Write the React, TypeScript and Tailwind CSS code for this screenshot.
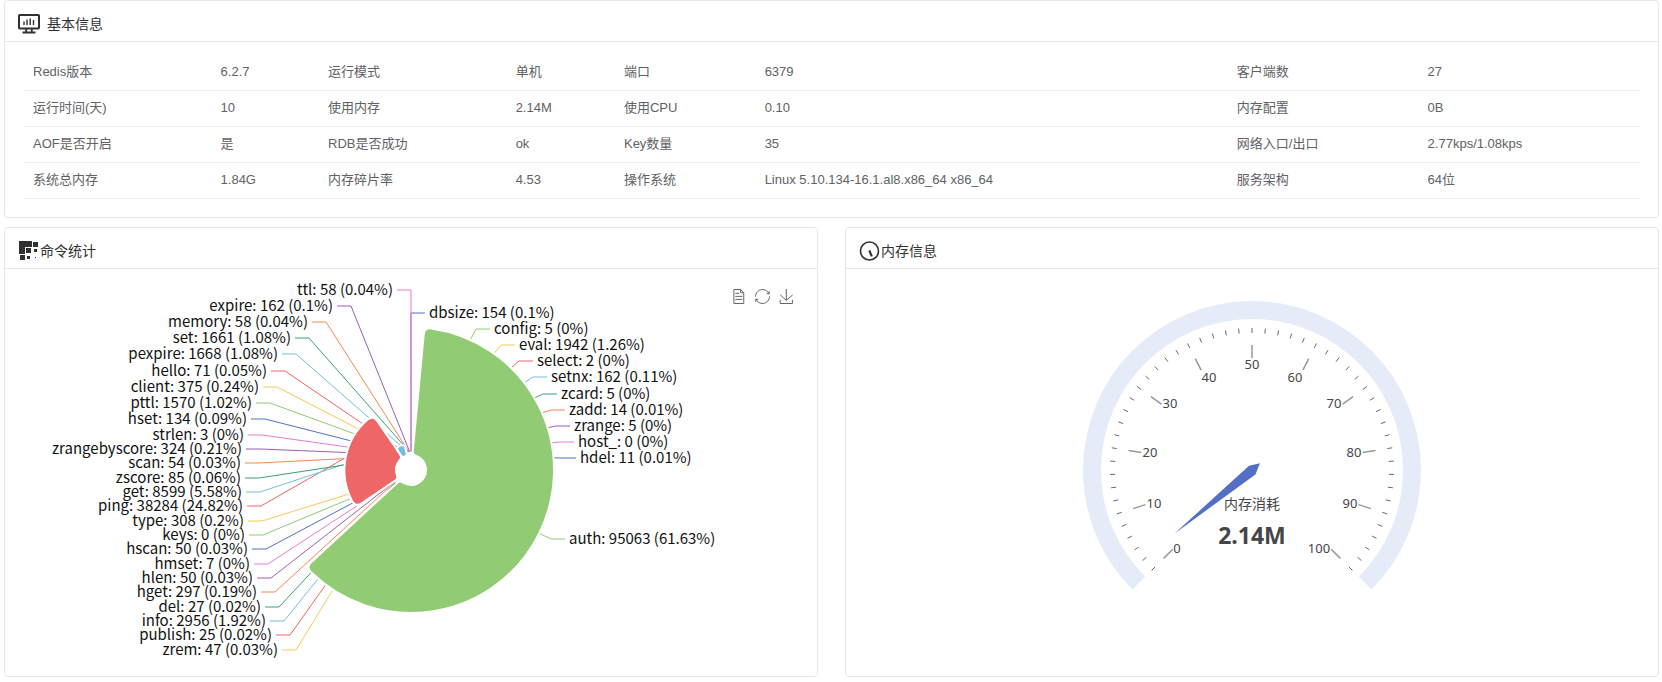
import type { ReactNode } from "react";

const PALETTE = ["#5470c6", "#91cc75", "#fac858", "#ee6666", "#73c0de", "#3ba272", "#fc8452", "#9a60b4", "#ea7ccc"];

const INFO_ROWS: string[][] = [
  ["Redis版本", "6.2.7", "运行模式", "单机", "端口", "6379", "客户端数", "27"],
  ["运行时间(天)", "10", "使用内存", "2.14M", "使用CPU", "0.10", "内存配置", "0B"],
  ["AOF是否开启", "是", "RDB是否成功", "ok", "Key数量", "35", "网络入口/出口", "2.77kps/1.08kps"],
  ["系统总内存", "1.84G", "内存碎片率", "4.53", "操作系统", "Linux 5.10.134-16.1.al8.x86_64 x86_64", "服务架构", "64位"],
];

type Command = {
  name: string;
  value: number;
  percent: string;
  side: "left" | "right";
  elbow: [number, number];
};

const cmd = (name: string, value: number, percent: string, side: "left" | "right", x: number, y: number): Command => ({
  name,
  value,
  percent,
  side,
  elbow: [x, y],
});

const COMMANDS: Command[] = [
  cmd("dbsize", 154, "0.1", "right", 411, 314),
  cmd("config", 5, "0", "right", 476, 330),
  cmd("eval", 1942, "1.26", "right", 501, 346),
  cmd("select", 2, "0", "right", 519, 362),
  cmd("setnx", 162, "0.11", "right", 533, 378),
  cmd("zcard", 5, "0", "right", 543, 395),
  cmd("zadd", 14, "0.01", "right", 551, 411),
  cmd("zrange", 5, "0", "right", 556, 427),
  cmd("host_", 0, "0", "right", 560, 443),
  cmd("hdel", 11, "0.01", "right", 562, 459),
  cmd("auth", 95063, "61.63", "right", 551, 540),
  cmd("zrem", 47, "0.03", "left", 296, 651),
  cmd("publish", 25, "0.02", "left", 290, 636),
  cmd("info", 2956, "1.92", "left", 284, 622),
  cmd("del", 27, "0.02", "left", 279, 608),
  cmd("hget", 297, "0.19", "left", 275, 593),
  cmd("hlen", 50, "0.03", "left", 271, 579),
  cmd("hmset", 7, "0", "left", 268, 565),
  cmd("hscan", 50, "0.03", "left", 266, 550),
  cmd("keys", 0, "0", "left", 263, 536),
  cmd("type", 308, "0.2", "left", 262, 522),
  cmd("ping", 38284, "24.82", "left", 261, 507),
  cmd("get", 8599, "5.58", "left", 260, 493),
  cmd("zscore", 85, "0.06", "left", 259, 479),
  cmd("scan", 54, "0.03", "left", 259, 464),
  cmd("zrangebyscore", 324, "0.21", "left", 260, 450),
  cmd("strlen", 3, "0", "left", 262, 436),
  cmd("hset", 134, "0.09", "left", 265, 420),
  cmd("pttl", 1570, "1.02", "left", 270, 404),
  cmd("client", 375, "0.24", "left", 277, 388),
  cmd("hello", 71, "0.05", "left", 285, 372),
  cmd("pexpire", 1668, "1.08", "left", 296, 355),
  cmd("set", 1661, "1.08", "left", 309, 339),
  cmd("memory", 58, "0.04", "left", 326, 323),
  cmd("expire", 162, "0.1", "left", 351, 307),
  cmd("ttl", 58, "0.04", "left", 411, 291),
];

const polar = (cx: number, cy: number, r: number, deg: number): [number, number] => {
  const a = (deg * Math.PI) / 180;
  return [cx + r * Math.sin(a), cy - r * Math.cos(a)];
};

const at = (p: [number, number]) => `${p[0].toFixed(2)} ${p[1].toFixed(2)}`;

/* Ring sector with softened corners; angles run clockwise from twelve o'clock. */
function sectorPath(cx: number, cy: number, r0: number, r1: number, a0: number, a1: number) {
  const span = a1 - a0;
  const toDeg = 180 / Math.PI;
  const co = Math.min(7, (r1 - r0) / 2, (span / toDeg) * r1 * 0.4);
  const ci = Math.min(4, (r1 - r0) / 2, (span / toDeg) * r0 * 0.4);
  const dO = (co / r1) * toDeg;
  const dI = (ci / r0) * toDeg;
  const large = span > 180 ? 1 : 0;
  const p = (r: number, a: number) => at(polar(cx, cy, r, a));
  return [
    `M${p(r0 + ci, a0)}`,
    `L${p(r1 - co, a0)}`,
    `Q${p(r1, a0)} ${p(r1, a0 + dO)}`,
    `A${r1} ${r1} 0 ${large} 1 ${p(r1, a1 - dO)}`,
    `Q${p(r1, a1)} ${p(r1 - co, a1)}`,
    `L${p(r0 + ci, a1)}`,
    `Q${p(r0, a1)} ${p(r0, a1 - dI)}`,
    `A${r0} ${r0} 0 ${large} 0 ${p(r0, a0 + dI)}`,
    `Q${p(r0, a0)} ${p(r0 + ci, a0)}`,
    "Z",
  ].join(" ");
}

function CommandChart() {
  const cx = 411;
  const cy = 471;
  const inner = 15;
  const outer = 143;
  const total = COMMANDS.reduce((sum, c) => sum + c.value, 0);
  const max = Math.max(...COMMANDS.map((c) => c.value));
  let angle = 0;
  const slices = COMMANDS.map((c, i) => {
    const start = angle;
    const end = start + (c.value / total) * 360;
    angle = end;
    const radius = inner + ((outer - inner) * c.value) / max;
    return { ...c, start, end, radius, color: PALETTE[i % PALETTE.length] };
  });
  return (
    <svg viewBox="5 270 812 407" className="block h-[407px] w-full" role="img" aria-label="命令统计">
      {slices.map((s) => {
        const from = polar(cx, cy, s.radius, (s.start + s.end) / 2);
        const [ex, ey] = s.elbow;
        const dir = s.side === "left" ? -1 : 1;
        return (
          <path
            key={s.name}
            d={`M${at(from)} L${ex} ${ey} H${ex + dir * 14}`}
            fill="none"
            stroke={s.color}
            strokeWidth="1"
          />
        );
      })}
      {slices.map((s) => (
        <path
          key={s.name}
          d={sectorPath(cx, cy, inner, s.radius, s.start, s.end)}
          fill={s.color}
          stroke="#fff"
          strokeWidth="2"
        />
      ))}
      <g fontSize="15" fill="#111" className="font-['Noto_Sans_CJK_SC',sans-serif]">
        {slices.map((s) => (
          <text
            key={s.name}
            x={s.elbow[0] + (s.side === "left" ? -18 : 18)}
            y={s.elbow[1] + 5}
            textAnchor={s.side === "left" ? "end" : "start"}
          >
            {`${s.name}: ${s.value} (${s.percent}%)`}
          </text>
        ))}
      </g>
    </svg>
  );
}

const GAUGE_LABELS: [number, number, number][] = [
  [0, 1177, 549],
  [10, 1154, 504],
  [20, 1150, 453],
  [30, 1170, 404],
  [40, 1209, 378],
  [50, 1252, 365],
  [60, 1295, 378],
  [70, 1334, 404],
  [80, 1354, 453],
  [90, 1350, 504],
  [100, 1319, 549],
];

function MemoryGauge() {
  const cx = 1252;
  const cy = 471;
  const ticks = Array.from({ length: 51 }, (_, i) => -135 + i * 5.4);
  const splits = Array.from({ length: 11 }, (_, i) => -135 + i * 27);
  return (
    <svg viewBox="846 270 812 407" className="block h-[407px] w-full" role="img" aria-label="内存消耗 2.14M">
      <path
        d={`M${at(polar(cx, cy, 160, -135))} A160 160 0 1 1 ${at(polar(cx, cy, 160, 135))}`}
        fill="none"
        stroke="#e6ebf8"
        strokeWidth="18"
      />
      {ticks.map((a) => (
        <path key={a} d={`M${at(polar(cx, cy, 142, a))} L${at(polar(cx, cy, 137, a))}`} stroke="#63677a" strokeWidth="1" />
      ))}
      {splits.map((a) => (
        <path key={a} d={`M${at(polar(cx, cy, 125, a))} L${at(polar(cx, cy, 112, a))}`} stroke="#999" strokeWidth="1.5" />
      ))}
      <path d="M1174.3 534.7 L1249 466.8 L1260 464.2 L1255.4 475.4 Z" fill="#5470c6" />
      <g className="font-['Noto_Sans','Noto_Sans_CJK_SC',sans-serif]" fill="#464646" textAnchor="middle">
        {GAUGE_LABELS.map(([value, x, y]) => (
          <text key={value} x={x} y={y + 5} fontSize="13">
            {value}
          </text>
        ))}
        <text x={cx} y="510" fontSize="14">
          内存消耗
        </text>
        <text x={cx} y="545" fontSize="23" fontWeight="700">
          2.14M
        </text>
      </g>
    </svg>
  );
}

function ToolButton({ label, path }: { label: string; path: string }) {
  return (
    <button type="button" aria-label={label} className="block size-[15px] cursor-pointer">
      <svg viewBox="0 0 60 60" className="block size-[15px] overflow-visible" fill="none" stroke="#666" strokeWidth="4">
        <path d={path} />
      </svg>
    </button>
  );
}

function Toolbox() {
  return (
    <div className="absolute top-5 right-[23px] flex gap-[9px]">
      <ToolButton
        label="数据视图"
        path="M17.5,17.3H33 M45.4,29.5h-28 M11.5,2v56H51V14.8L38.4,2H11.5z M38.4,2.2v12.7H51 M45.4,41.7h-28"
      />
      <ToolButton
        label="还原"
        path="M47,18.9h9.8V8.7 M56.3,20.1C52.1,9,40.5,0.6,26.8,2.1C12.6,3.7,1.6,16.2,2.1,30.6 M13,41.1H3.1v10.2 M3.7,39.9c4.2,11.1,15.8,19.5,29.5,18c14.2-1.6,25.2-14.1,24.7-28.5"
      />
      <ToolButton
        label="保存为图片"
        path="M4.7,22.9L29.3,45.5L54.7,23.4M4.6,43.6L4.6,58L53.8,58L53.8,43.6M29.2,45.1L29.2,0"
      />
    </div>
  );
}

function MonitorIcon() {
  return (
    <svg viewBox="0 0 22 20" className="h-5 w-[22px]" fill="none" stroke="#303133">
      <rect x="1" y="1" width="20" height="13.5" rx="0.8" strokeWidth="2" />
      <path d="M6 7.5v3.5 M9 5.5v5.5 M12.2 4.5v6.5 M15.5 6v5" strokeWidth="1.4" />
      <path d="M8.2 15v3 M13.8 15v3" strokeWidth="1.8" />
      <path d="M4.5 18.5h13" strokeWidth="1.8" />
    </svg>
  );
}

function BlocksIcon() {
  return (
    <svg viewBox="-1 0 21 20" className="h-5 w-[21px]" fill="#303133">
      <path d="M0 0h13v6H6v7H0z" />
      <path d="M14 1h5v5h-5z M7 7h5v5H7z M15 8h3v3h-3z M1 14h5v5H1z M8 15h3v3H8z M16 16h1v1h-1z" />
    </svg>
  );
}

function DialIcon() {
  return (
    <svg viewBox="-1 0 21 20" className="h-5 w-[21px]" fill="none" stroke="#303133">
      <circle cx="9.5" cy="10" r="9" strokeWidth="1.6" />
      <path d="M9.3 9.4L11.8 15.4" strokeWidth="2.2" />
    </svg>
  );
}

function Card({ icon, title, children }: { icon: ReactNode; title: ReactNode; children: ReactNode }) {
  return (
    <section className="overflow-hidden rounded-sm border border-[#e4e7ed] bg-white">
      <header className="flex h-[41px] items-center border-b border-[#e4e7ed] px-[13px] pt-1.5 text-sm text-[#303133]">
        {icon}
        {title}
      </header>
      {children}
    </section>
  );
}

export default function App() {
  return (
    <main className="flex flex-col gap-[9px] bg-white pr-[3px] pb-1 pl-1 font-['Liberation_Sans','Noto_Sans_CJK_SC',sans-serif]">
      <Card icon={<MonitorIcon />} title={<h2 className="ml-[7px]">基本信息</h2>}>
        <div className="px-[18px] pt-3 pb-[18px]">
          <table className="w-full table-fixed border-collapse text-left text-[13px] leading-5 text-[#606266]">
            <colgroup>
              <col className="w-[11.6%]" />
              <col className="w-[6.65%]" />
              <col className="w-[11.6%]" />
              <col className="w-[6.7%]" />
              <col className="w-[8.7%]" />
              <col className="w-[29.2%]" />
              <col className="w-[11.8%]" />
              <col className="w-[13.75%]" />
            </colgroup>
            <tbody>
              {INFO_ROWS.map((row) => (
                <tr key={row[0]} className="h-9 border-b border-[#ebeef5]">
                  {row.map((text, i) =>
                    i % 2 === 0 ? (
                      <th key={i} scope="row" className="px-2.5 font-normal whitespace-nowrap">
                        {text}
                      </th>
                    ) : (
                      <td key={i} className="px-2.5 whitespace-nowrap">
                        {text}
                      </td>
                    ),
                  )}
                </tr>
              ))}
            </tbody>
          </table>
        </div>
      </Card>
      <div className="grid grid-cols-2 gap-[27px]">
        <Card icon={<BlocksIcon />} title={<h2 className="ml-px">命令统计</h2>}>
          <div className="relative">
            <CommandChart />
            <Toolbox />
          </div>
        </Card>
        <Card icon={<DialIcon />} title={<h2 className="ml-px">内存信息</h2>}>
          <MemoryGauge />
        </Card>
      </div>
    </main>
  );
}
